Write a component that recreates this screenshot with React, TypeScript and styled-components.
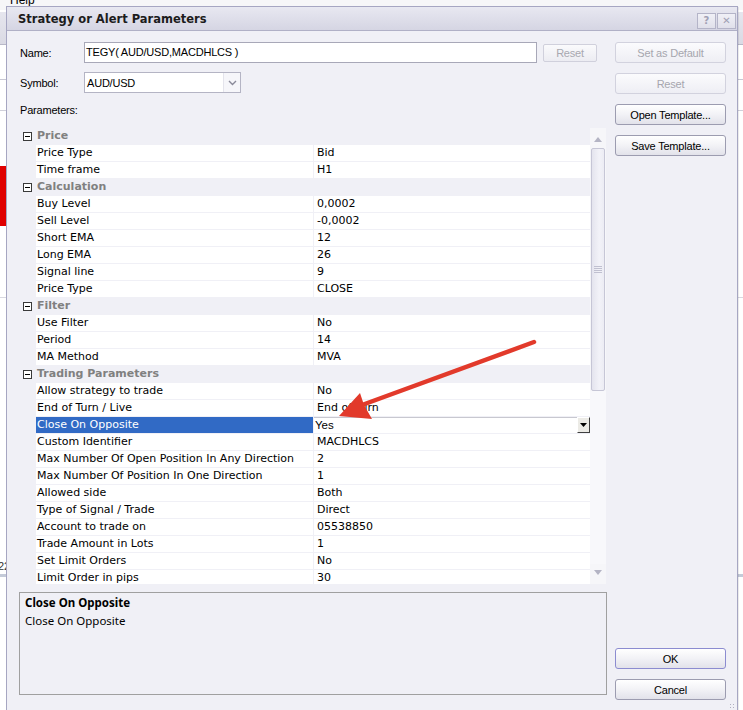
import React from 'react';
import styled, { createGlobalStyle } from 'styled-components';

type Item = { name: string; value: string; selected?: boolean };
type Group = { title: string; items: Item[] };

const groups: Group[] = [
  {
    title: 'Price',
    items: [
      { name: 'Price Type', value: 'Bid' },
      { name: 'Time frame', value: 'H1' },
    ],
  },
  {
    title: 'Calculation',
    items: [
      { name: 'Buy Level', value: '0,0002' },
      { name: 'Sell Level', value: '-0,0002' },
      { name: 'Short EMA', value: '12' },
      { name: 'Long EMA', value: '26' },
      { name: 'Signal line', value: '9' },
      { name: 'Price Type', value: 'CLOSE' },
    ],
  },
  {
    title: 'Filter',
    items: [
      { name: 'Use Filter', value: 'No' },
      { name: 'Period', value: '14' },
      { name: 'MA Method', value: 'MVA' },
    ],
  },
  {
    title: 'Trading Parameters',
    items: [
      { name: 'Allow strategy to trade', value: 'No' },
      { name: 'End of Turn / Live', value: 'End of Turn' },
      { name: 'Close On Opposite', value: 'Yes', selected: true },
      { name: 'Custom Identifier', value: 'MACDHLCS' },
      { name: 'Max Number Of Open Position In Any Direction', value: '2' },
      { name: 'Max Number Of Position In One Direction', value: '1' },
      { name: 'Allowed side', value: 'Both' },
      { name: 'Type of Signal / Trade', value: 'Direct' },
      { name: 'Account to trade on', value: '05538850' },
      { name: 'Trade Amount in Lots', value: '1' },
      { name: 'Set Limit Orders', value: 'No' },
      { name: 'Limit Order in pips', value: '30' },
    ],
  },
];

const App = () => {
  return (
    <Desktop>
      <GlobalStyle />
      <AppWindow>
        <MenuBar>
          <MenuItem>Help</MenuItem>
        </MenuBar>
        <ToolBar />
        <Band $h={35} $line="#c8c8d4" />
        <Band $h={31} $line="#d0d0da" />
        <Band $h={55} />
        <Band $h={60}>
          <RedMark />
        </Band>
        <Band $h={72} $line="#d8d8e0" />
        <Band $h={260} />
        <Band $h={16}>
          <BgText>22</BgText>
        </Band>
        <Band $h={3} $bg="#c4cad8" />
      </AppWindow>

      <Dialog>
        <TitleBar>
          <Title>Strategy or Alert Parameters</Title>
          <CaptionButtons>
            <CaptionButton>?</CaptionButton>
            <CaptionButton>✕</CaptionButton>
          </CaptionButtons>
        </TitleBar>
        <Body>
          <LeftCol>
            <FieldRow>
              <Label>Name:</Label>
              <NameInput>TEGY( AUD/USD,MACDHLCS )</NameInput>
              <SmallButton disabled>Reset</SmallButton>
            </FieldRow>
            <FieldRow $top={9}>
              <Label>Symbol:</Label>
              <Select>
                <SelectText>AUD/USD</SelectText>
                <SelectArrow>
                  <svg width="9" height="6" viewBox="0 0 9 6">
                    <path d="M1 1 L4.5 4.5 L8 1" fill="none" stroke="#8a8a9a" strokeWidth="1.4" />
                  </svg>
                </SelectArrow>
              </Select>
            </FieldRow>
            <ParamsLabel>Parameters:</ParamsLabel>
            <PropertyGrid>
              <Rows>
                {groups.map((g) => (
                  <React.Fragment key={g.title}>
                    <Row>
                      <Gutter>
                        <Collapse />
                      </Gutter>
                      <CategoryCell>{g.title}</CategoryCell>
                    </Row>
                    {g.items.map((it) => (
                      <Row key={g.title + it.name}>
                        <Gutter />
                        <NameCell $selected={it.selected}>{it.name}</NameCell>
                        {it.selected ? (
                          <EditCell>
                            <span>{it.value}</span>
                            <DropButton>
                              <svg width="7" height="4" viewBox="0 0 7 4">
                                <path d="M0 0 H7 L3.5 4 Z" fill="#000" />
                              </svg>
                            </DropButton>
                          </EditCell>
                        ) : (
                          <ValueCell>{it.value}</ValueCell>
                        )}
                      </Row>
                    ))}
                  </React.Fragment>
                ))}
              </Rows>
              <ScrollBar>
                <ScrollArrow>
                  <svg width="8" height="5" viewBox="0 0 8 5">
                    <path d="M0 5 L4 0 L8 5 Z" fill="#b4b4c4" />
                  </svg>
                </ScrollArrow>
                <Thumb>
                  <Grip />
                </Thumb>
                <Track />
                <ScrollArrow $bottom>
                  <svg width="8" height="5" viewBox="0 0 8 5">
                    <path d="M0 0 L8 0 L4 5 Z" fill="#b4b4c4" />
                  </svg>
                </ScrollArrow>
              </ScrollBar>
            </PropertyGrid>
            <Description>
              <DescTitle>Close On Opposite</DescTitle>
              <DescText>Close On Opposite</DescText>
            </Description>
          </LeftCol>
          <RightCol>
            <Button disabled>Set as Default</Button>
            <Button disabled>Reset</Button>
            <Button>Open Template...</Button>
            <Button>Save Template...</Button>
            <Button $default $push>OK</Button>
            <Button>Cancel</Button>
          </RightCol>
        </Body>
        <Grip2 />
      </Dialog>

      <Overlay width="743" height="710" viewBox="0 0 743 710">
        <line x1="534" y1="342" x2="362" y2="405" stroke="#e23a2b" strokeWidth="4.5" strokeLinecap="round" />
        <path d="M339 416 L360 393 L364 405 L372 419 Z" fill="#e23a2b" />
      </Overlay>
    </Desktop>
  );
};

const GlobalStyle = createGlobalStyle`
  html, body {
    margin: 0;
    padding: 0;
    background: #ffffff;
  }
  body {
    font-family: "Liberation Sans", Arial, sans-serif;
  }
`;

const Desktop = styled.div`
  position: relative;
  width: 743px;
  height: 710px;
  overflow: hidden;
`;

const AppWindow = styled.div`
  display: flex;
  flex-direction: column;
  height: 100%;
  background: #ffffff;
`;

const MenuBar = styled.div`
  height: 10px;
  overflow: hidden;
  padding-left: 10px;
  background: #f6f6f8;
  border-bottom: 2px solid #ffffff;
  font-size: 12px;
  color: #000;
`;

const MenuItem = styled.span`
  display: block;
  margin-top: -7px;
  line-height: 14px;
`;

const ToolBar = styled.div`
  height: 32px;
  background: linear-gradient(#e6e6ee, #dadae4);
  border-bottom: 1px solid #b8b8c8;
`;

const Band = styled.div<{ $h: number; $line?: string; $bg?: string }>`
  height: ${(p) => p.$h}px;
  box-sizing: border-box;
  background: ${(p) => p.$bg || '#ffffff'};
  border-bottom: ${(p) => (p.$line ? `1px solid ${p.$line}` : 'none')};
  display: flex;
  align-items: stretch;
`;

const RedMark = styled.div`
  width: 60px;
  background: #e00000;
`;

const BgText = styled.span`
  font-size: 11px;
  color: #333;
  line-height: 16px;
  margin-left: -2px;
`;

const Dialog = styled.div`
  position: absolute;
  left: 6px;
  top: 6px;
  width: 732px;
  height: 708px;
  box-sizing: border-box;
  border: 1px solid #a6a6c2;
  background: #f0f0f6;
  display: flex;
  flex-direction: column;
  box-shadow: 1px 1px 0 rgba(0, 0, 0, 0.08);
`;

const TitleBar = styled.div`
  height: 24px;
  box-sizing: border-box;
  display: flex;
  align-items: center;
  padding: 0 1px 0 11px;
  background: linear-gradient(#e8e8f1, #d5d5e3);
  border-bottom: 1px solid #b0b0c6;
`;

const Title = styled.div`
  flex: 1;
  font-family: "DejaVu Sans", Verdana, sans-serif;
  font-weight: bold;
  font-size: 11.5px;
  color: #1c1c1c;
  margin-top: 1px;
`;

const CaptionButtons = styled.div`
  display: flex;
  gap: 1px;
  margin-top: 4px;
`;

const CaptionButton = styled.div`
  width: 19px;
  height: 16px;
  box-sizing: border-box;
  border: 1px solid #b4b4c8;
  background: linear-gradient(#f0f0f6, #e0e0ea);
  display: flex;
  align-items: center;
  justify-content: center;
  font-family: "DejaVu Sans", sans-serif;
  font-weight: bold;
  font-size: 10px;
  color: #a0a0b4;
`;

const Body = styled.div`
  flex: 1;
  display: flex;
  gap: 8px;
  padding: 11px 11px 13px 12px;
`;

const LeftCol = styled.div`
  width: 588px;
  display: flex;
  flex-direction: column;
`;

const FieldRow = styled.div<{ $top?: number }>`
  display: flex;
  align-items: center;
  height: 21px;
  margin-top: ${(p) => p.$top || 0}px;
`;

const uiFont = `
  font-family: "Liberation Sans", Arial, sans-serif;
  font-size: 11px;
  letter-spacing: -0.2px;
`;

const Label = styled.div`
  ${uiFont}
  width: 64px;
  padding-left: 1px;
  color: #000;
`;

const NameInput = styled.div`
  ${uiFont}
  width: 453px;
  height: 21px;
  box-sizing: border-box;
  border: 1px solid #a8a8b8;
  background: #ffffff;
  padding-left: 1px;
  line-height: 19px;
  color: #000;
`;

const SmallButton = styled.button`
  ${uiFont}
  width: 54px;
  height: 18px;
  margin-left: 6px;
  padding: 0;
  border: 1px solid #d0d0dc;
  border-radius: 2px;
  background: linear-gradient(#fafafc, #ececf2);
  color: #a8a8b0;
`;

const Select = styled.div`
  width: 157px;
  height: 21px;
  box-sizing: border-box;
  border: 1px solid #b4b4c4;
  background: #ffffff;
  display: flex;
  align-items: center;
`;

const SelectText = styled.div`
  ${uiFont}
  flex: 1;
  padding-left: 2px;
  color: #000;
`;

const SelectArrow = styled.div`
  width: 17px;
  height: 19px;
  box-sizing: border-box;
  border-left: 1px solid #e4e4ec;
  background: #f6f6fa;
  display: flex;
  align-items: center;
  justify-content: center;
`;

const ParamsLabel = styled.div`
  ${uiFont}
  margin-top: 11px;
  height: 12px;
  line-height: 12px;
  padding-left: 1px;
  color: #000;
`;

const PropertyGrid = styled.div`
  margin-top: 12px;
  height: 456px;
  display: flex;
  overflow: hidden;
  background: #f0f0f6;
`;

const Rows = styled.div`
  width: 571px;
  display: flex;
  flex-direction: column;
  gap: 1px;
`;

const Row = styled.div`
  display: grid;
  grid-template-columns: 16px 277px 276px;
  column-gap: 1px;
  height: 16px;
  flex-shrink: 0;
  font-family: "DejaVu Sans", Verdana, sans-serif;
  font-size: 11px;
  line-height: 16px;
  color: #000;
`;

const Gutter = styled.div`
  display: flex;
  align-items: center;
  padding-left: 4px;
`;

const Collapse = styled.div`
  position: relative;
  width: 9px;
  height: 9px;
  box-sizing: border-box;
  border: 1px solid #3a3a3a;
  background: #ffffff;
  &::after {
    content: '';
    position: absolute;
    left: 1px;
    right: 1px;
    top: 3px;
    height: 1px;
    background: #000;
  }
`;

const CategoryCell = styled.div`
  grid-column: 2 / 4;
  padding-left: 1px;
  font-weight: bold;
  color: #808080;
`;

const NameCell = styled.div<{ $selected?: boolean }>`
  padding-left: 1px;
  white-space: nowrap;
  overflow: hidden;
  background: ${(p) => (p.$selected ? '#316ac5' : '#ffffff')};
  color: ${(p) => (p.$selected ? '#ffffff' : '#000')};
`;

const ValueCell = styled.div`
  padding-left: 3px;
  white-space: nowrap;
  overflow: hidden;
  background: #ffffff;
`;

const EditCell = styled.div`
  display: flex;
  justify-content: space-between;
  padding-left: 1px;
  background: #ffffff;
  box-shadow: inset 0 1px 0 #c8c8d0;
  font-family: "Liberation Sans", Arial, sans-serif;
  font-size: 11.5px;
`;

const DropButton = styled.div`
  width: 13px;
  height: 16px;
  box-sizing: border-box;
  border-top: 1px solid #ffffff;
  border-left: 1px solid #ffffff;
  border-right: 1px solid #404040;
  border-bottom: 1px solid #404040;
  background: #ecebe6;
  display: flex;
  align-items: center;
  justify-content: center;
`;

const ScrollBar = styled.div`
  width: 16px;
  display: flex;
  flex-direction: column;
  background: #f6f6f9;
`;

const ScrollArrow = styled.div<{ $bottom?: boolean }>`
  height: 20px;
  flex-shrink: 0;
  display: flex;
  align-items: center;
  justify-content: center;
  padding-top: ${(p) => (p.$bottom ? '0' : '2px')};
  padding-bottom: ${(p) => (p.$bottom ? '4px' : '0')};
  box-sizing: border-box;
`;

const Thumb = styled.div`
  height: 243px;
  margin: 0 1px;
  box-sizing: border-box;
  border: 1px solid #c6c6d6;
  border-radius: 2px;
  background: linear-gradient(to right, #e4e4ee, #f2f2f8 60%, #ececf4);
  display: flex;
  align-items: center;
  justify-content: center;
`;

const Grip = styled.div`
  width: 8px;
  height: 7px;
  background: repeating-linear-gradient(#c0c0d0 0 1px, transparent 1px 2px);
`;

const Track = styled.div`
  flex: 1;
  background: #f8f8fb;
`;

const Description = styled.div`
  margin-top: 8px;
  height: 103px;
  box-sizing: border-box;
  border: 1px solid #a0a0a0;
  padding: 1px 5px;
  font-family: "Noto Sans", "Open Sans", sans-serif;
  font-size: 11.5px;
  line-height: 18px;
  color: #000;
`;

const DescTitle = styled.div`
  font-weight: bold;
`;

const DescText = styled.div``;

const RightCol = styled.div`
  width: 111px;
  display: flex;
  flex-direction: column;
  gap: 10px;
`;

const Button = styled.button<{ $default?: boolean; $push?: boolean }>`
  ${uiFont}
  height: 21px;
  flex-shrink: 0;
  padding: 0;
  border-radius: 3px;
  margin-top: ${(p) => (p.$push ? 'auto' : '0')};
  border: 1px solid ${(p) => (p.$default ? '#8c8cd0' : '#9c9cb0')};
  background: linear-gradient(#ffffff, #f2f2f6 50%, #e2e2ea);
  color: #000;
  &:disabled {
    border-color: #d2d2de;
    background: linear-gradient(#fbfbfd, #eeeef4);
    color: #a6a6ae;
  }
`;

const Grip2 = styled.div`
  position: absolute;
  right: 2px;
  bottom: 4px;
  width: 6px;
  height: 6px;
  background: radial-gradient(circle, #b0b0c0 0.8px, transparent 1px) 0 0 / 3px 3px;
`;

const Overlay = styled.svg`
  position: absolute;
  left: 0;
  top: 0;
  pointer-events: none;
`;

export default App;
